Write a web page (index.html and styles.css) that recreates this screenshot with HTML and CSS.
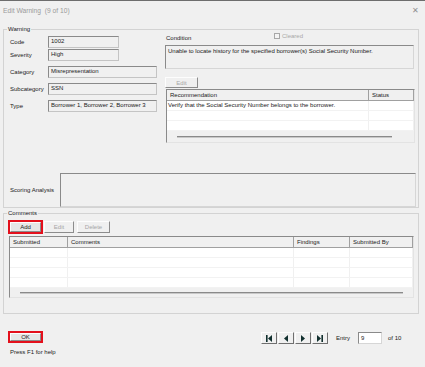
FILE: index.html
```html
<!DOCTYPE html>
<html lang="en">
<head>
    <meta charset="UTF-8">
    <meta name="viewport" content="width=device-width, initial-scale=1.0">
    <title>Edit Warning</title>
    <link rel="stylesheet" href="styles.css">
</head>
<body>

    <div class="titlebar">
        <span class="title">Edit Warning&nbsp; (9 of 10)</span>
        <span class="close">&#x2715;</span>
    </div>

    <fieldset class="group warning">
        <legend>Warning</legend>
        <div class="warning-top">
            <div class="fields">
                <div class="field-row row-code"><span class="flabel">Code</span><span class="fbox short">1002</span></div>
                <div class="field-row row-severity"><span class="flabel">Severity</span><span class="fbox short">High</span></div>
                <div class="field-row"><span class="flabel">Category</span><span class="fbox">Misrepresentation</span></div>
                <div class="field-row"><span class="flabel">Subcategory</span><span class="fbox">SSN</span></div>
                <div class="field-row"><span class="flabel">Type</span><span class="fbox">Borrower 1, Borrower 2, Borrower 3</span></div>
            </div>
            <div class="condition">
                <div class="cond-head">
                    <span class="cond-label">Condition</span>
                    <span class="cleared"><span class="checkbox"></span>Cleared</span>
                </div>
                <div class="textbox cond-box">Unable to locate history for the specified borrower(s) Social Security Number.</div>
                <button class="btn rec-edit" disabled>Edit</button>
                <div class="list rec-list">
                    <div class="list-head">
                        <span class="col rec-col">Recommendation</span>
                        <span class="col">Status</span>
                    </div>
                    <div class="list-row"><span class="col rec-col">Verify that the Social Security Number belongs to the borrower.</span><span class="col"></span></div>
                    <div class="list-row"><span class="col rec-col"></span><span class="col"></span></div>
                    <div class="list-row"><span class="col rec-col"></span><span class="col"></span></div>
                    <div class="hscroll"><span class="thumb rec-thumb"></span></div>
                </div>
            </div>
        </div>
        <div class="scoring">
            <span class="score-label">Scoring Analysis</span>
            <div class="textbox score-box"></div>
        </div>
    </fieldset>

    <fieldset class="group comments">
        <legend>Comments</legend>
        <div class="btn-row">
            <span class="mark"><button class="btn add-btn">Add</button></span>
            <button class="btn edit-btn" disabled>Edit</button>
            <button class="btn delete-btn" disabled>Delete</button>
        </div>
        <div class="list comment-list">
            <div class="list-head">
                <span class="col c-sub">Submitted</span>
                <span class="col c-com">Comments</span>
                <span class="col c-find">Findings</span>
                <span class="col">Submitted By</span>
            </div>
            <div class="list-row"><span class="col c-sub"></span><span class="col c-com"></span><span class="col c-find"></span><span class="col"></span></div>
            <div class="list-row"><span class="col c-sub"></span><span class="col c-com"></span><span class="col c-find"></span><span class="col"></span></div>
            <div class="list-row"><span class="col c-sub"></span><span class="col c-com"></span><span class="col c-find"></span><span class="col"></span></div>
            <div class="list-row"><span class="col c-sub"></span><span class="col c-com"></span><span class="col c-find"></span><span class="col"></span></div>
            <div class="hscroll short-scroll"><span class="thumb com-thumb"></span></div>
        </div>
    </fieldset>

    <div class="footer">
        <div class="footer-left">
            <span class="mark ok-mark"><button class="btn ok-btn">OK</button></span>
            <div class="help">Press F1 for help</div>
        </div>
        <div class="nav">
            <button class="btn nav-btn">
                <svg width="6" height="7" viewBox="0 0 6 7"><rect x="0" y="0" width="1.6" height="7"/><path d="M6 0 L2 3.5 L6 7 Z"/></svg>
            </button>
            <button class="btn nav-btn">
                <svg width="4" height="7" viewBox="0 0 4 7"><path d="M4 0 L0 3.5 L4 7 Z"/></svg>
            </button>
            <button class="btn nav-btn">
                <svg width="4" height="7" viewBox="0 0 4 7"><path d="M0 0 L4 3.5 L0 7 Z"/></svg>
            </button>
            <button class="btn nav-btn">
                <svg width="6" height="7" viewBox="0 0 6 7"><path d="M0 0 L4 3.5 L0 7 Z"/><rect x="4.4" y="0" width="1.6" height="7"/></svg>
            </button>
            <span class="entry-label">Entry</span>
            <span class="entry-box">9</span>
            <span class="of-label">of 10</span>
        </div>
    </div>

</body>
</html>
```

FILE: styles.css
```css
* {
    box-sizing: border-box;
}
body {
    margin: 0;
    width: 425px;
    height: 367px;
    overflow: hidden;
    background-color: #f0f0f0;
    border-top: 1px solid #6d6d6d; /* window frame */
    font-family: "Liberation Sans", Arial, sans-serif;
    font-size: 6px;
    color: #1a1a1a;
}
.titlebar {
    height: 19px;
    display: flex;
    align-items: center;
    justify-content: space-between;
    padding: 0 6px 0 3px;
}
.title {
    font-size: 6.7px;
    color: #9a9a9a;
}
.close {
    font-size: 8px;
    color: #8f8f8f;
}

/* group boxes */
.group {
    margin: 0 0 0 3px;
    padding: 0;
    width: 416px;
    min-width: 0;
    border: 1px solid #d3d3d3;
}
.group legend {
    margin-left: 3px;
    padding: 0 1px;
    line-height: 7px;
}
.warning {
    margin-top: 6px;
}
.warning-top {
    display: flex;
    height: 140px;
}
.fields {
    width: 161px;
    padding-left: 6px;
}
.field-row {
    display: flex;
    align-items: center;
    height: 12px;
    margin-top: 5px;
}
.field-row.row-code {
    margin-top: 3px;
}
.field-row.row-severity {
    margin-top: 1px;
}
.flabel {
    width: 38px;
}
.fbox {
    width: 109px;
    height: 12px;
    padding: 0 2px;
    line-height: 9px;
    border: 1px solid;
    border-color: #8a8a8a #c4c4c4 #c4c4c4 #8a8a8a;
}
.fbox.short {
    width: 71px;
}
.textbox {
    border: 1px solid;
    border-color: #8a8a8a #d6d6d6 #d6d6d6 #8a8a8a;
}

/* condition column */
.condition {
    width: 250px;
}
.cond-head {
    display: grid;
    grid-template-columns: 109px auto;
    height: 12px;
}
.cond-label {
    padding-top: 2px;
    padding-left: 1px;
}
.cleared {
    display: flex;
    align-items: center;
    gap: 2px;
    height: 6px;
    color: #a8a8a8;
}
.checkbox {
    width: 6px;
    height: 6px;
    border: 1px solid #a8a8a8;
    background-color: #f4f4f4;
}
.cond-box {
    width: 249px;
    height: 24px;
    padding: 2px 2px;
}

/* buttons */
.btn {
    display: flex;
    align-items: center;
    justify-content: center;
    padding: 0;
    margin: 0;
    font: inherit;
    color: #1a1a1a;
    background-color: #e6e6e6;
    border: 1px solid;
    border-color: #fdfdfd #8c8c8c #8c8c8c #fdfdfd;
    border-radius: 0;
}
.btn:disabled {
    color: #a6a6a6;
    background-color: #f0f0f0;
}
.rec-edit {
    margin-top: 8px;
    width: 33px;
    height: 11px;
}

/* list views */
.list {
    border: 1px solid;
    border-color: #8a8a8a #e3e3e3 #e3e3e3 #8a8a8a;
    background-color: #f0f0f0;
}
.list-head {
    display: flex;
    height: 11px;
    border-bottom: 1px solid #a0a0a0;
}
.list-head .col {
    border-right: 1px solid #a0a0a0;
    padding-left: 3px;
    line-height: 10px;
}
.list-row {
    display: flex;
    height: 10px;
    background-color: #fff;
    border-bottom: 1px solid #f2f2f2;
}
.list-row .col {
    border-right: 1px solid #f0f0f0;
    padding-left: 1px;
    line-height: 9px;
}
.col {
    flex: none;
}
.col:last-child {
    flex: 1;
}
.rec-list {
    margin: 1px 0 0 1px;
    width: 249px;
    height: 54px;
}
.rec-col {
    width: 202px;
}
.hscroll {
    display: flex;
    align-items: center;
    height: 11px;
}
.thumb {
    height: 2px;
    border-top: 1px solid #8a8a8a;
    border-bottom: 1px solid #c8c8c8;
}
.rec-thumb {
    margin-left: 10px;
    width: 215px;
}

/* scoring */
.scoring {
    display: flex;
    align-items: center;
    height: 34px;
    padding-left: 6px;
}
.score-label {
    width: 50px;
}
.score-box {
    width: 356px;
    height: 34px;
}

/* comments */
.comments {
    margin-top: 2px;
    padding-bottom: 15px;
}
.btn-row {
    display: flex;
    align-items: center;
    margin: 3px 0 0 4px;
}
.mark {
    display: flex;
    border: 2px solid #e3101c;
}
.add-btn {
    width: 31px;
    height: 10px;
}
.edit-btn {
    margin-left: 1px;
    width: 30px;
    height: 12px;
}
.delete-btn {
    margin-left: 3px;
    width: 33px;
    height: 12px;
}
.comment-list {
    margin: 2px 0 0 5px;
    width: 405px;
    height: 62px;
}
.c-sub {
    width: 58px;
}
.c-com {
    width: 226px;
}
.c-find {
    width: 56px;
}
.short-scroll {
    height: 9px;
}
.com-thumb {
    margin-left: 10px;
    width: 383px;
}

/* footer */
.footer {
    display: flex;
    align-items: flex-start;
    margin-top: 17px;
    padding-left: 8px;
}
.footer-left {
    width: 253px;
}
.ok-mark {
    width: 35px;
}
.ok-btn {
    width: 31px;
    height: 8px;
}
.help {
    margin-top: 6px;
    padding-left: 2px;
    line-height: 7px;
}
.nav {
    display: flex;
    align-items: center;
    gap: 1px;
    margin-top: 1px;
}
.nav-btn {
    width: 16px;
    height: 12px;
    background-color: #f0f0f0;
    border-color: #fdfdfd #6f6f6f #6f6f6f #fdfdfd;
}
.nav-btn svg {
    fill: #12302f;
}
.entry-label {
    margin-left: 7px;
}
.entry-box {
    margin-left: 7px;
    width: 24px;
    height: 12px;
    padding-left: 2px;
    line-height: 10px;
    background-color: #fff;
    border: 1px solid;
    border-color: #8a8a8a #d6d6d6 #d6d6d6 #8a8a8a;
}
.of-label {
    margin-left: 5px;
}
```
